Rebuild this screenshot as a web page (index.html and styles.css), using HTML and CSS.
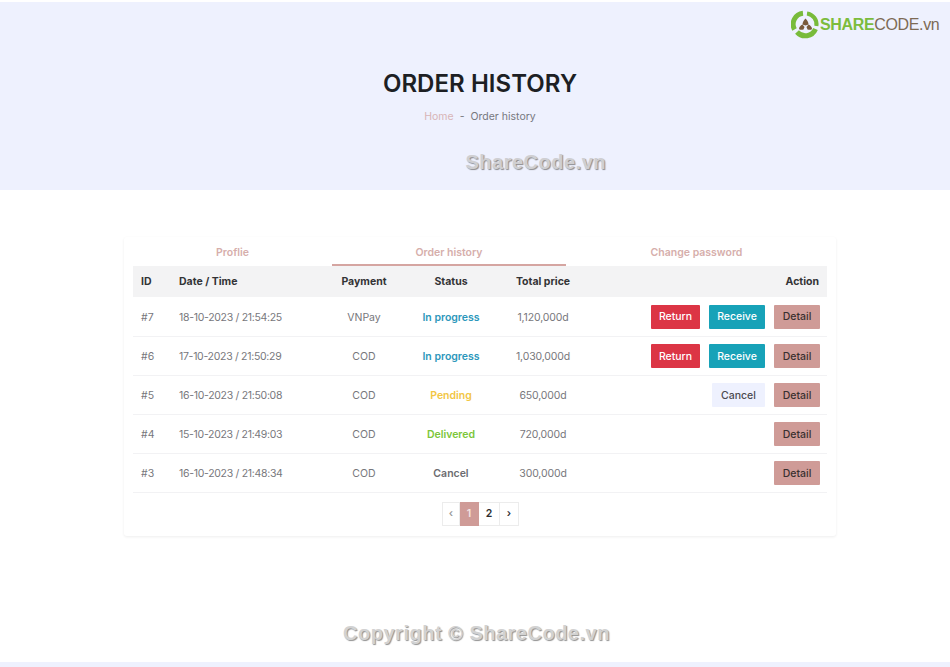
FILE: index.html
```html
<!DOCTYPE html>
<html lang="en">
<head>
    <meta charset="UTF-8">
    <meta name="viewport" content="width=device-width, initial-scale=1.0">
    <title>Order History</title>
    <link rel="stylesheet" href="styles.css">
</head>
<body>
    <a class="logo" href="#">
        <svg width="29" height="29" viewBox="0 0 29 29">
            <!-- green ring, three arcs -->
            <path d="M3.500 19.500A11 11 0 0 1 12 3.300" fill="none" stroke="#78bb3a" stroke-width="5"/>
            <path d="M16 3.400A11 11 0 0 1 25.400 16" fill="none" stroke="#78bb3a" stroke-width="4"/>
            <path d="M24.500 19A11 11 0 0 1 6 22" fill="none" stroke="#78bb3a" stroke-width="5"/>
            <!-- brown centre -->
            <path d="M14.500 8.500c2 2 3 4 3 6l-3 1-3-1c0-2 1-4 3-6z" fill="#7a5a3c"/>
            <path d="M8 19c0-2 1.500-3.500 3.500-4.500l2 2.500-1 2.500c-2 .5-3.500 .5-4.500-.5z" fill="#7a5a3c"/>
            <path d="M21 19c0-2-1.500-3.500-3.500-4.500l-2 2.500 1 2.500c2 .5 3.500 .5 4.500-.5z" fill="#7a5a3c"/>
        </svg>
        <span class="logo-text"><b>SHARE</b>CODE.vn</span>
    </a>

    <section class="hero">
        <h1>ORDER HISTORY</h1>
        <div class="crumbs"><a href="#">Home</a><span>-</span><span>Order history</span></div>
    </section>
    <div class="mark mark-top">ShareCode.vn</div>

    <main class="card">
        <div class="tabs">
            <a class="tab tab-profile" href="#">Proflie</a>
            <a class="tab tab-orders active" href="#">Order history</a>
            <a class="tab tab-password" href="#">Change password</a>
        </div>
        <table class="orders">
            <thead>
                <tr>
                    <th class="c-id">ID</th>
                    <th class="c-date">Date / Time</th>
                    <th class="c-pay">Payment</th>
                    <th class="c-status">Status</th>
                    <th class="c-total">Total price</th>
                    <th class="c-action">Action</th>
                </tr>
            </thead>
            <tbody>
                <tr>
                    <td>#7</td>
                    <td class="date">18-10-2023 / 21:54:25</td>
                    <td class="center">VNPay</td>
                    <td class="center status progress">In progress</td>
                    <td class="center price">1,120,000d</td>
                    <td class="actions">
                        <button class="btn btn-return">Return</button>
                        <button class="btn btn-receive">Receive</button>
                        <button class="btn btn-detail">Detail</button>
                    </td>
                </tr>
                <tr>
                    <td>#6</td>
                    <td class="date">17-10-2023 / 21:50:29</td>
                    <td class="center">COD</td>
                    <td class="center status progress">In progress</td>
                    <td class="center price">1,030,000d</td>
                    <td class="actions">
                        <button class="btn btn-return">Return</button>
                        <button class="btn btn-receive">Receive</button>
                        <button class="btn btn-detail">Detail</button>
                    </td>
                </tr>
                <tr>
                    <td>#5</td>
                    <td class="date">16-10-2023 / 21:50:08</td>
                    <td class="center">COD</td>
                    <td class="center status pending">Pending</td>
                    <td class="center price">650,000d</td>
                    <td class="actions">
                        <button class="btn btn-cancel">Cancel</button>
                        <button class="btn btn-detail">Detail</button>
                    </td>
                </tr>
                <tr>
                    <td>#4</td>
                    <td class="date">15-10-2023 / 21:49:03</td>
                    <td class="center">COD</td>
                    <td class="center status delivered">Delivered</td>
                    <td class="center price">720,000d</td>
                    <td class="actions">
                        <button class="btn btn-detail">Detail</button>
                    </td>
                </tr>
                <tr>
                    <td>#3</td>
                    <td class="date">16-10-2023 / 21:48:34</td>
                    <td class="center">COD</td>
                    <td class="center status cancelled">Cancel</td>
                    <td class="center price">300,000d</td>
                    <td class="actions">
                        <button class="btn btn-detail">Detail</button>
                    </td>
                </tr>
            </tbody>
        </table>
        <nav class="pager">
            <a class="page page-prev" href="#">&lsaquo;</a>
            <a class="page page-one current" href="#">1</a>
            <a class="page page-two" href="#">2</a>
            <a class="page page-next" href="#">&rsaquo;</a>
        </nav>
    </main>

    <footer class="footer">
        <div class="mark-bottom">Copyright © ShareCode.vn</div>
        <div class="footer-band"></div>
    </footer>
</body>
</html>
```

FILE: styles.css
```css
* {
    box-sizing: border-box;
}
body {
    margin: 0;
    padding-top: 2px;
    position: relative;
    background-color: #fff;
    font-family: Inter, "Open Sans", sans-serif;
    color: #77777c;
    font-size: 10.5px;
}
a {
    text-decoration: none;
}

/* header */
.hero {
    height: 188px;
    background-color: #eef1fe;
    padding: 67px 0 0 10px;
    text-align: center;
}
h1 {
    margin: 0;
    font-size: 24px;
    line-height: 30px;
    font-weight: 600;
    letter-spacing: 0.05px;
    color: #1d1f24;
}
.crumbs {
    display: flex;
    justify-content: center;
    gap: 6px;
    margin-top: 10px;
    line-height: 16px;
    color: #77787f;
}
.crumbs a {
    color: #d8b4b6;
}
.logo {
    position: absolute;
    top: 10px;
    left: 791px;
    display: flex;
    align-items: center;
}
.logo-text {
    font-family: "Liberation Sans", sans-serif;
    font-size: 16px;
    letter-spacing: -0.35px;
    color: #7d6a55;
}
.logo-text b {
    color: #7cbc3c;
}
.mark {
    position: absolute;
    font-family: "Liberation Sans", sans-serif;
    font-weight: 700;
}
.mark-top {
    top: 150px;
    left: 465.500px;
    font-size: 20px;
    line-height: 24px;
    letter-spacing: 0.5px;
    color: #cfcfd2;
    text-shadow: 1px 1px 1px #8c8c90;
}

/* card */
.card {
    width: 712px;
    height: 299px;
    margin: 47px 0 0 124px;
    padding: 0 9px;
    background-color: #fff;
    box-shadow: 0 1px 3px rgba(0, 0, 0, 0.07);
    border-radius: 3px;
}
.tabs {
    display: flex;
    height: 29px;
}
.tab {
    display: block;
    padding-top: 9px;
    text-align: center;
    line-height: 14px;
    font-weight: 600;
    color: #d6aeab;
}
.tab-profile {
    width: 199px;
}
.tab-orders {
    width: 234px;
}
.tab-password {
    width: 261px;
}
.tab.active {
    border-bottom: 2px solid #d5a5a1;
}

.orders {
    width: 694px;
    table-layout: fixed;
    border-collapse: collapse;
}
.orders th {
    height: 31px;
    padding: 0 8px;
    background-color: #f3f3f4;
    color: #333336;
    font-weight: 700;
    text-align: left;
}
.orders td {
    height: 39px;
    padding: 2px 8px 0;
    border-bottom: 1px solid #f2f2f4;
}
.orders th.c-pay, .orders th.c-status, .orders th.c-total, .center {
    text-align: center;
}
.orders th.c-action {
    text-align: right;
}
.c-id {
    width: 38px;
}
.c-date {
    width: 152px;
}
.c-pay {
    width: 82px;
}
.c-status {
    width: 92px;
}
.c-total {
    width: 92px;
}
.date {
    letter-spacing: -0.3px;
}
.price {
    letter-spacing: -0.15px;
}
.status {
    font-weight: 600;
    letter-spacing: 0;
}
.progress {
    color: #2c97bb;
}
.pending {
    color: #f2c644;
}
.delivered {
    color: #7cc63a;
}
.cancelled {
    color: #6c6c70;
}

.orders td.actions {
    padding-right: 7px;
    padding-top: 1px;
    text-align: right;
    font-size: 0;
}
.btn {
    height: 24px;
    margin-left: 9px;
    padding: 0;
    border: none;
    border-radius: 1px;
    font-family: inherit;
    font-size: 10.5px;
    font-weight: 500;
    vertical-align: middle;
    cursor: pointer;
}
.btn-return {
    width: 49px;
    background-color: #dc3545;
    color: #fff;
}
.btn-receive {
    width: 56px;
    background-color: #17a2b8;
    color: #fff;
}
.btn-detail {
    width: 46px;
    background-color: #cf9b97;
    color: #3a3030;
}
.btn-cancel {
    width: 53px;
    background-color: #eef1fe;
    color: #4a4a4f;
}

/* pagination */
.pager {
    display: flex;
    justify-content: center;
    margin-top: 9px;
}
.page {
    height: 24px;
    padding-left: 1px;
    line-height: 22px;
    text-align: center;
    border: 1px solid #ececec;
    border-left: none;
    color: #2e2e30;
    font-weight: 600;
}
.page-prev {
    width: 18px;
    border-left: 1px solid #ececec;
    color: #9a9a9a;
}
.page-one {
    width: 19px;
}
.page-two {
    width: 21px;
}
.page-next {
    width: 19px;
}
.page.current {
    background-color: #cf9b97;
    border-color: #cf9b97;
    color: #f4e4e2;
}

/* footer */
.footer {
    margin-top: 85px;
}
.mark-bottom {
    height: 24px;
    padding-left: 3px;
    text-align: center;
    font-family: "Liberation Sans", sans-serif;
    font-weight: 700;
    font-size: 20px;
    line-height: 24px;
    letter-spacing: 0.5px;
    color: #d2d2d2;
    text-shadow: 1px 1px 1px #929292;
}
.footer-band {
    height: 5px;
    margin-top: 17px;
    background-color: #eef1fe;
}
```
